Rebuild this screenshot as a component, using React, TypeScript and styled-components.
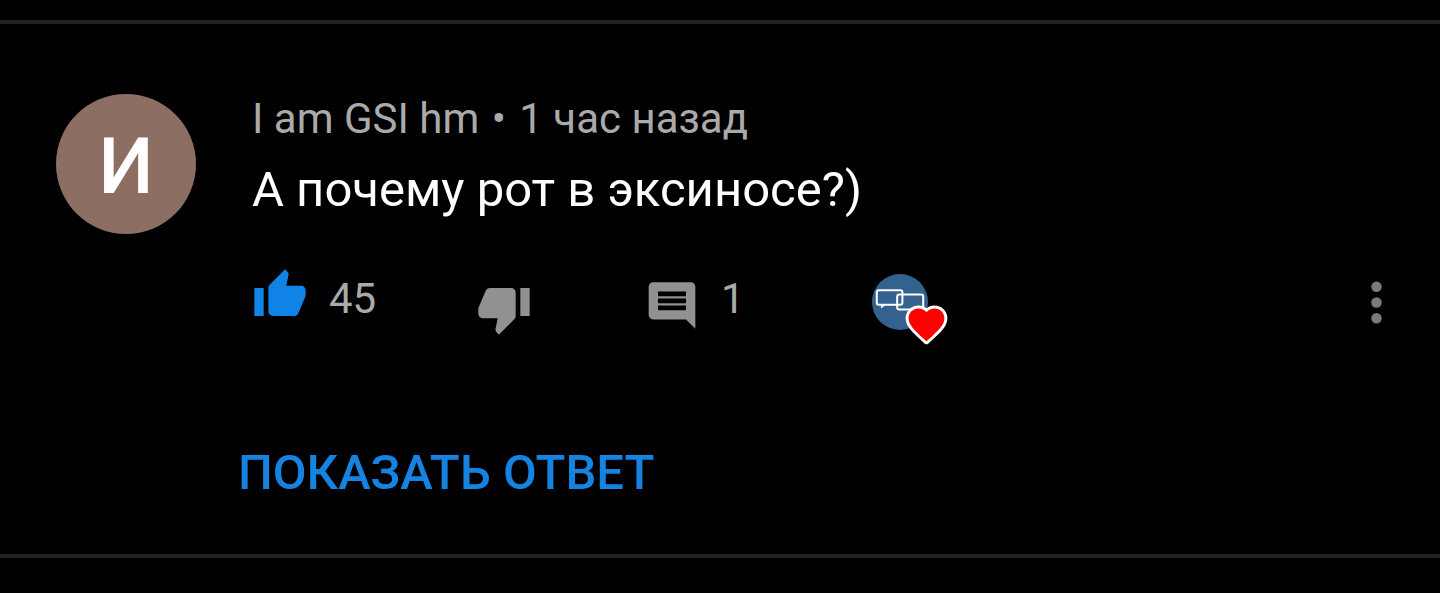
import React from 'react';
import styled, { createGlobalStyle } from 'styled-components';

const GlobalStyle = createGlobalStyle`
  * { box-sizing: border-box; }
  body {
    margin: 0;
    background: #000;
    color: #fff;
    font-family: Roboto, "Noto Sans", sans-serif;
  }
`;

const Page = styled.main`
  padding-top: 20px;
`;

const Comment = styled.article`
  display: flex;
  align-items: flex-start;
  gap: 56px;
  padding: 70px 32px 52px 56px;
  border-top: 4px solid #212121;
  border-bottom: 4px solid #212121;
`;

const Avatar = styled.div`
  flex: none;
  display: flex;
  align-items: center;
  justify-content: center;
  width: 140px;
  height: 140px;
  padding-top: 6px;
  border-radius: 50%;
  background: #8d6e63;
  font-size: 78px;
  font-weight: 500;
  line-height: 92px;
`;

const Body = styled.div`
  flex: 1;
  min-width: 0;
`;

const Meta = styled.p`
  margin: 0 0 17px;
  color: #aaa;
  font-size: 42px;
  line-height: 50px;
`;

const Separator = styled.span`
  margin: 0 3px 0 2px;
`;

const Message = styled.p`
  margin: 0;
  font-size: 49px;
  line-height: 58px;
`;

const Actions = styled.div`
  display: grid;
  grid-template-columns: 224px 168px 228px 1fr auto;
  align-items: start;
  margin-top: 48px;
`;

const ActionButton = styled.button<{ $tone: string; $drop?: number }>`
  display: flex;
  align-items: flex-start;
  justify-self: start;
  gap: 21px;
  margin: ${({ $drop = 0 }) => $drop}px 0 0;
  padding: 0;
  border: 0;
  background: none;
  color: ${({ $tone }) => $tone};
  font: inherit;
  cursor: pointer;
`;

const Icon = styled.svg<{ $size?: number }>`
  display: block;
  flex: none;
  width: ${({ $size = 56 }) => $size}px;
  height: ${({ $size = 56 }) => $size}px;
  fill: currentColor;
`;

const Count = styled.span<{ $drop?: number }>`
  margin-top: ${({ $drop = 0 }) => $drop}px;
  color: #aaa;
  font-size: 42px;
  line-height: 50px;
`;

const CreatorHeart = styled.div`
  position: relative;
  width: 56px;
  height: 56px;
  margin-top: 7px;
`;

const HeartBadge = styled.svg`
  position: absolute;
  left: 33px;
  top: 29px;
  width: 43px;
  height: 43px;
  overflow: visible;
`;

const ShowReply = styled.button`
  display: block;
  margin: 107px 0 0 -14px;
  padding: 0;
  border: 0;
  background: none;
  color: #1583df;
  font: inherit;
  font-size: 49px;
  font-weight: 500;
  line-height: 58px;
  text-transform: uppercase;
  cursor: pointer;
`;

export default function App() {
  return (
    <Page>
      <GlobalStyle />
      <Comment>
        <Avatar>И</Avatar>
        <Body>
          <Meta>
            I am GSI hm <Separator>•</Separator> 1 час назад
          </Meta>
          <Message>А почему рот в эксиносе?)</Message>
          <Actions>
            <ActionButton type="button" $tone="#0f83e6" aria-pressed="true">
              <Icon viewBox="0 0 24 24" aria-hidden="true">
                <path d="M1 21h4V9H1v12zm22-11c0-1.1-.9-2-2-2h-6.31l.95-4.57.03-.32c0-.41-.17-.79-.44-1.06L14.17 1 7.59 7.59C7.22 7.95 7 8.45 7 9v10c0 1.1.9 2 2 2h9c.83 0 1.54-.5 1.84-1.22l3.02-7.05c.09-.23.14-.47.14-.73v-2z" />
              </Icon>
              <Count $drop={7}>45</Count>
            </ActionButton>
            <ActionButton type="button" $tone="#919191" $drop={14} aria-label="Не нравится">
              <Icon viewBox="0 0 24 24" aria-hidden="true">
                <path d="M15 3H6c-.83 0-1.54.5-1.84 1.22l-3.02 7.05c-.09.23-.14.47-.14.73v2c0 1.1.9 2 2 2h6.31l-.95 4.57-.03.32c0 .41.17.79.44 1.06L9.83 23l6.59-6.59c.36-.36.58-.86.58-1.41V5c0-1.1-.9-2-2-2zm4 0v12h4V3h-4z" />
              </Icon>
            </ActionButton>
            <ActionButton type="button" $tone="#919191" $drop={7}>
              <Icon viewBox="0 -1.5 24 24" aria-hidden="true">
                <path d="M22 4c0-1.1-.9-2-2-2H4c-1.1 0-2 .9-2 2v12c0 1.1.9 2 2 2h14l4 4V4zm-4 10H6v-2h12v2zm0-3H6V9h12v2zm0-3H6V6h12v2z" />
              </Icon>
              <Count>1</Count>
            </ActionButton>
            <CreatorHeart>
              <Icon viewBox="0 0 56 56" aria-hidden="true">
                <circle cx="28" cy="28" r="28" fill="#33628f" />
                <g fill="none" stroke="#fff" strokeWidth="2">
                  <rect x="4.8" y="16.2" width="25.6" height="14.6" rx="2" />
                  <rect x="25.2" y="20.6" width="26" height="14.8" rx="2" />
                </g>
                <path d="M9 31v3.4l4.5-3.4z" fill="#fff" />
              </Icon>
              <HeartBadge viewBox="0 0 24 24" aria-hidden="true">
                <path
                  d="M12 21.35l-1.45-1.32C5.4 15.36 2 12.28 2 8.5 2 5.42 4.42 3 7.5 3c1.74 0 3.41.81 4.5 2.09C13.09 3.81 14.76 3 16.5 3 19.58 3 22 5.42 22 8.5c0 3.78-3.4 6.86-8.55 11.54L12 21.35z"
                  fill="#f00"
                  stroke="#fff"
                  strokeWidth="3.3"
                  strokeLinejoin="round"
                  paintOrder="stroke"
                />
              </HeartBadge>
            </CreatorHeart>
            <ActionButton type="button" $tone="#7a7a7a" $drop={4} aria-label="Ещё">
              <Icon viewBox="0 0 24 24" $size={63} aria-hidden="true">
                <circle cx="12" cy="6" r="2" />
                <circle cx="12" cy="12" r="2" />
                <circle cx="12" cy="18" r="2" />
              </Icon>
            </ActionButton>
          </Actions>
          <ShowReply type="button">Показать ответ</ShowReply>
        </Body>
      </Comment>
    </Page>
  );
}
